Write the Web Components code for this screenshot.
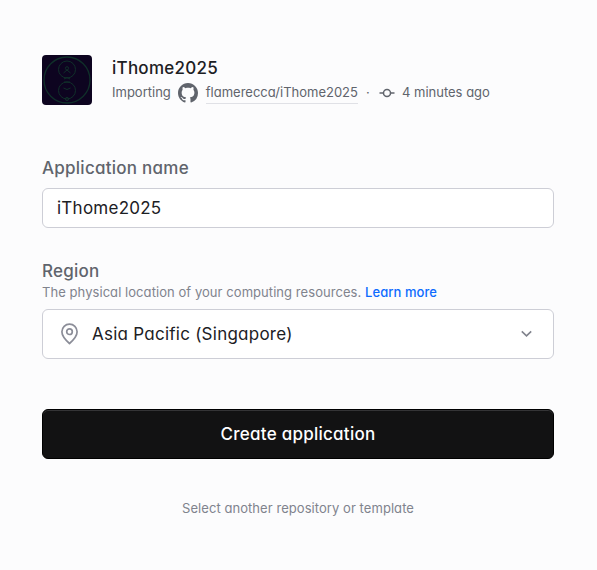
<!DOCTYPE html>
<html lang="en">
<head>
<meta charset="utf-8">
<title>Create application</title>
<style>
body{margin:0;background:#fcfcfd;font-family:Inter,"Liberation Sans",sans-serif;font-feature-settings:"cv11","ss03";color:#1c2024}
</style>
</head>
<body>
<create-page></create-page>
<script>
const define=(name,html)=>customElements.define(name,class extends HTMLElement{
  constructor(){super();this.attachShadow({mode:'open'}).innerHTML=html;}
});

define('repo-avatar',`<style>:host{display:block;width:50px;height:50px;flex:none}svg{display:block}</style>
<svg width="50" height="50" viewBox="0 0 50 50" fill="none" stroke="#10302a" stroke-width="1">
<rect width="50" height="50" rx="4" fill="#0d0420" stroke="none"/>
<circle cx="25" cy="25" r="23" stroke-width="1.3"/>
<circle cx="25" cy="14.500" r="8.500"/><circle cx="25" cy="35.500" r="8.500"/>
<circle cx="25" cy="13.300" r="1.600"/><path d="M21.500 18l3.500-3 3.500 3M21.500 33q3.500 3 7 0M22 24q3-3 6 0M22 27h6"/>
<circle cx="25" cy="44" r="1.600"/>
</svg>`);

define('github-icon',`<style>:host{display:block;width:20px;height:20px;flex:none}svg{display:block}</style>
<svg width="20" height="20" viewBox="0 0 16 16" fill="#60646c"><path d="M8 0C3.58 0 0 3.58 0 8c0 3.54 2.29 6.53 5.47 7.59.4.07.55-.17.55-.38 0-.19-.01-.82-.01-1.49-2.01.37-2.53-.49-2.69-.94-.09-.23-.48-.94-.82-1.13-.28-.15-.68-.52-.01-.53.63-.01 1.08.58 1.23.82.72 1.21 1.87.87 2.33.66.07-.52.28-.87.51-1.07-1.78-.2-3.64-.89-3.64-3.95 0-.87.31-1.59.82-2.15-.08-.2-.36-1.02.08-2.12 0 0 .67-.21 2.2.82.64-.18 1.32-.27 2-.27s1.36.09 2 .27c1.53-1.04 2.2-.82 2.2-.82.44 1.1.16 1.92.08 2.12.51.56.82 1.27.82 2.15 0 3.07-1.87 3.75-3.65 3.95.29.25.54.73.54 1.48 0 1.07-.01 1.93-.01 2.2 0 .21.15.46.55.38A8.01 8.01 0 0 0 16 8c0-4.42-3.58-8-8-8z"/></svg>`);

define('commit-icon',`<style>:host{display:block;width:16px;height:16px;flex:none}svg{display:block}</style>
<svg width="16" height="16" viewBox="0 0 16 16" fill="none" stroke="#60646c" stroke-width="1.500"><circle cx="8" cy="8" r="3.500"/><path d="M.5 8h4M11.500 8h4"/></svg>`);

define('pin-icon',`<style>:host{display:block;width:20px;height:24px;flex:none}svg{display:block}</style>
<svg width="20" height="24" viewBox="0 0 20 24" fill="none" stroke="#8b8d98" stroke-width="1.700"><path stroke-linejoin="round" d="M10.500 21.500C7.500 18.900 2.900 14.700 2.900 9.800a7.600 7.600 0 0 1 15.200 0c0 4.900-4.600 9.100-7.600 11.700z"/><circle cx="10.500" cy="9.700" r="2.800"/></svg>`);

define('chevron-icon',`<style>:host{display:block;width:12px;height:8px;flex:none}svg{display:block}</style>
<svg width="12" height="8" viewBox="0 0 12 8" fill="none" stroke="#80838d" stroke-width="1.600"><path d="M.8 1.400l4.700 4.500 4.700-4.500"/></svg>`);

define('repo-header',`<style>
:host{display:flex;gap:20px;height:50px}
.info{display:flex;flex-direction:column}
.title{font-size:17px;line-height:26px;font-weight:500;letter-spacing:.25px}
.meta{display:flex;align-items:flex-start;height:24px;padding-top:1px;font-size:13px;line-height:22px;color:#60646c;white-space:nowrap}
github-icon{margin:1px 8px 0 7px}
.repo{border-bottom:1px solid #e0e1e6;line-height:21px}
.dot{width:20px;text-align:center}
.imp,.dot,.ago{line-height:21px}
commit-icon{margin:3px 7px 0 1px}
</style>
<repo-avatar></repo-avatar>
<div class="info"><div class="title"><slot name="title"></slot></div>
<div class="meta"><span class="imp">Importing</span><github-icon></github-icon><span class="repo"><slot name="repo"></slot></span><span class="dot">·</span><commit-icon></commit-icon><span class="ago"><slot name="time"></slot></span></div></div>`);

define('form-field',`<style>
:host{display:block}
.label{font-size:17px;line-height:24px;font-weight:500;letter-spacing:.25px;color:#60646c}
</style><div class="label"><slot name="label"></slot></div><slot name="hint"></slot><slot></slot>`);

define('text-input',`<style>
:host{display:flex;align-items:center;box-sizing:border-box;height:40px;margin-top:8px;padding:0 14px;border:1px solid #cdced6;border-radius:6px;background:#fff;font-size:17px;line-height:24px;letter-spacing:.25px}
</style><slot></slot>`);

define('field-hint',`<style>
:host{display:block;font-size:13px;line-height:18px;letter-spacing:.06px;color:#80838d;white-space:nowrap}
::slotted(a){color:#0d6bff;font-weight:500;text-decoration:none}
</style><slot></slot>`);

define('region-select',`<style>
:host{display:flex;align-items:center;box-sizing:border-box;height:50px;margin-top:8px;padding:0 20px 0 16px;border:1px solid #cdced6;border-radius:6px;background:#fff;font-size:17px;line-height:24px;letter-spacing:.25px}
.value{flex:1;margin-left:13px}
</style><pin-icon></pin-icon><span class="value"><slot></slot></span><chevron-icon></chevron-icon>`);

define('primary-button',`<style>
:host{display:flex;align-items:center;justify-content:center;box-sizing:border-box;height:50px;border:1px solid #000;border-radius:6px;background:#121213;box-shadow:inset 0 1px #343436;color:#fff;font-size:17px;line-height:24px;font-weight:500;letter-spacing:.25px}
</style><slot></slot>`);

define('secondary-link',`<style>
:host{display:block;text-align:center;font-size:13px;line-height:20px;letter-spacing:.06px;color:#80838d}
</style><slot></slot>`);

define('create-page',`<style>
:host{display:flex;flex-direction:column;box-sizing:border-box;width:597px;height:570px;padding:55px 43px 0 42px}
.name{margin-top:51px}.region{margin-top:31px}primary-button{margin-top:50px}secondary-link{margin-top:39px}
</style>
<repo-header><span slot="title">iThome2025</span><span slot="repo">flamerecca/iThome2025</span><span slot="time">4 minutes ago</span></repo-header>
<form-field class="name"><span slot="label">Application name</span><text-input>iThome2025</text-input></form-field>
<form-field class="region"><span slot="label">Region</span><field-hint slot="hint">The physical location of your computing resources. <a>Learn more</a></field-hint><region-select>Asia Pacific (Singapore)</region-select></form-field>
<primary-button>Create application</primary-button>
<secondary-link>Select another repository or template</secondary-link>`);
</script>
</body>
</html>
